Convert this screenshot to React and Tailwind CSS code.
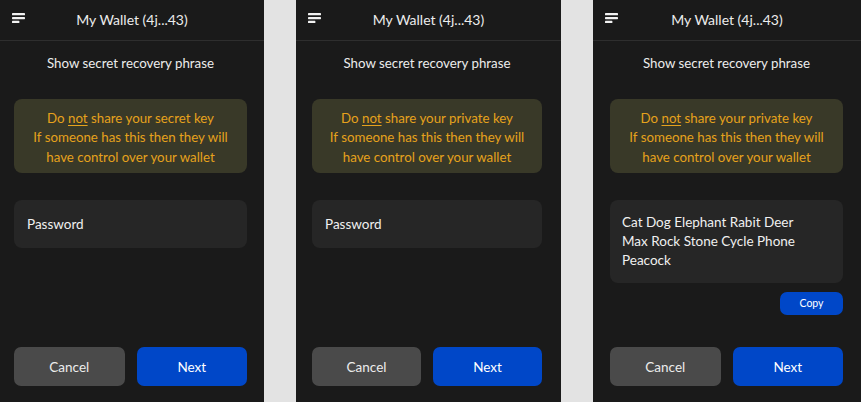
import React from "react";

function MenuIcon() {
  return (
    <svg width="14" height="12" viewBox="0 0 14 12" className="block">
      <rect x="0" y="0" width="13" height="2.3" rx="0.6" fill="#f2f2f2" />
      <rect x="0" y="4" width="13" height="2.2" rx="0.6" fill="#f2f2f2" />
      <rect x="0" y="7.8" width="7.4" height="2.3" rx="0.6" fill="#f2f2f2" />
    </svg>
  );
}

function Panel({ keyWord, revealed, pad }) {
  return (
    <div className="flex flex-col h-[402px] bg-[#1a1a1a] text-[#ececec]">
      {/* Header */}
      <div className="relative h-[41px] flex items-center justify-center border-b border-[#2e2e2e]">
        <div className="absolute left-[12px] top-[13px]">
          <MenuIcon />
        </div>
        <span className="text-[14px] -mt-[1px]">My Wallet (4j...43)</span>
      </div>

      <div className={`flex-1 flex flex-col ${pad}`}>
        <p className="text-center text-[13.3px] mt-[13px]">Show secret recovery phrase</p>

        {/* Warning */}
        <div className="mt-[25px] rounded-[8px] bg-[#393928] text-[#e6a21c] text-[13.3px] leading-[19.5px] text-center pt-[10px] pb-[6px]">
          <p>
            Do <span className="underline underline-offset-2">not</span> share your {keyWord}
          </p>
          <p>If someone has this then they will</p>
          <p>have control over your wallet</p>
        </div>

        {revealed ? (
          <>
            <div className="mt-[27px] h-[83px] rounded-[8px] bg-[#262626] px-[12px] pt-[13px] text-[13.5px] leading-[19px] text-[#f0f0f0]">
              Cat Dog Elephant Rabit Deer
              <br />
              Max Rock Stone Cycle Phone
              <br />
              Peacock
            </div>
            <div className="flex justify-end mt-[9px]">
              <button className="w-[63px] h-[23px] rounded-[7px] bg-[#0047c8] text-white text-[10.5px]">
                Copy
              </button>
            </div>
          </>
        ) : (
          <div className="mt-[27px] h-[48px] rounded-[8px] bg-[#262626] flex items-center px-[13px] text-[13.5px] text-[#f0f0f0]">
            Password
          </div>
        )}

        <div className="mt-auto mb-[16px] flex gap-[12px]">
          <button className="flex-1 h-[39px] rounded-[7px] bg-[#4a4a4a] text-[13.5px] text-[#ececec] pt-[2px]">
            Cancel
          </button>
          <button className="flex-1 h-[39px] rounded-[7px] bg-[#0047c8] text-[13.5px] text-white pt-[2px]">
            Next
          </button>
        </div>
      </div>
    </div>
  );
}

export default function App() {
  return (
    <div
      className="w-[861px] h-[402px] grid grid-cols-[264px_265px_268px] gap-[32px] bg-[#e3e3e3] overflow-hidden"
      style={{ fontFamily: "Lato, 'Noto Sans', sans-serif" }}
    >
      <Panel keyWord="secret key" pad="pl-[14px] pr-[17px]" />
      <Panel keyWord="private key" pad="pl-[16px] pr-[19px]" />
      <Panel keyWord="private key" revealed pad="pl-[17px] pr-[18px]" />
    </div>
  );
}
